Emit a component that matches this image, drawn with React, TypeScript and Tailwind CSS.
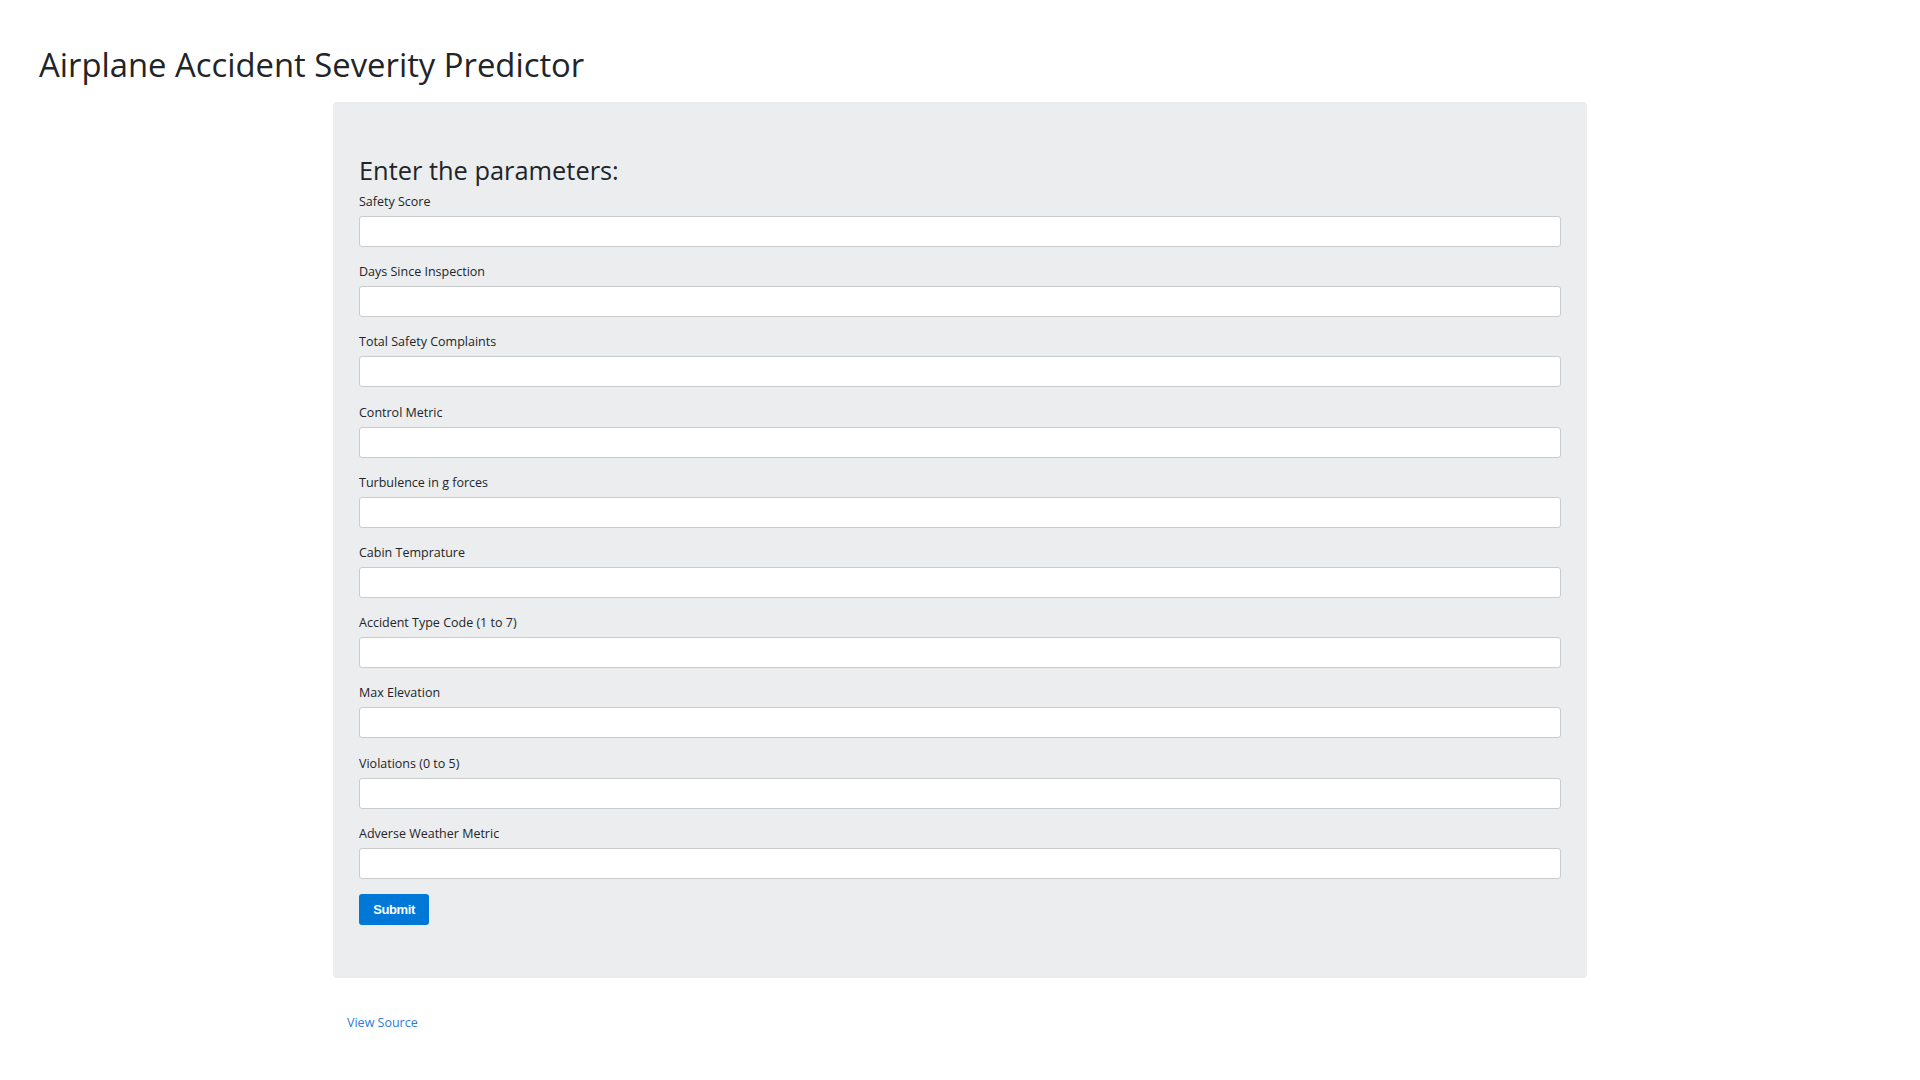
import React from 'react';

const fields = [
  'Safety Score',
  'Days Since Inspection',
  'Total Safety Complaints',
  'Control Metric',
  'Turbulence in g forces',
  'Cabin Temprature',
  'Accident Type Code (1 to 7)',
  'Max Elevation',
  'Violations (0 to 5)',
  'Adverse Weather Metric',
];

const App = () => {
  return (
    <div
      className="min-h-screen bg-white text-[#212529]"
      style={{ fontFamily: '"Open Sans", "Noto Sans", sans-serif' }}
    >
      <h1 className="pl-[39px] pt-[46px] text-[32.8px] leading-[38px] font-medium">
        Airplane Accident Severity Predictor
      </h1>

      <div className="w-[1254px] mx-auto mt-[18px] bg-[#ecedef] rounded-[4px] px-[26px] pt-[51px] pb-[53px]">
        <h3 className="text-[25.4px] leading-[34px] font-medium mb-[5px]">Enter the parameters:</h3>
        <form onSubmit={(e) => e.preventDefault()}>
          {fields.map((f) => (
            <div key={f} className="mb-[15.2px] last:mb-[14px]">
              <label className="block text-[12.5px] leading-[20px] mb-[4px]">{f}</label>
              <input
                type="text"
                className="block w-full h-[31px] bg-white border border-[#c9cbcd] rounded-[3px] px-2 outline-none"
              />
            </div>
          ))}
          <button
            type="submit"
            className="h-[31px] w-[70px] bg-[#0078d7] text-white rounded-[3px] text-[13px] font-bold tracking-[-0.4px]"
            style={{ fontFamily: '"Liberation Sans", Arial, sans-serif' }}
          >
            Submit
          </button>
        </form>
      </div>

      <div className="w-[1226px] mx-auto mt-[31px]">
        <a href="#" className="text-[12.5px] text-[#2f7cd6]">
          View Source
        </a>
      </div>
    </div>
  );
};

export default App;
